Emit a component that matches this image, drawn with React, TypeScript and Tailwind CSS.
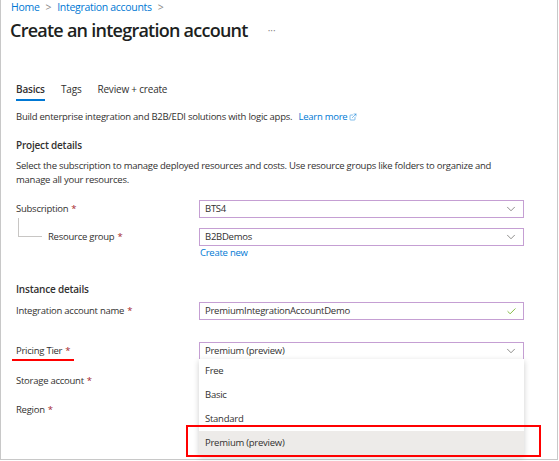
import { ChevronDown, Check, ExternalLink } from 'lucide-react'

const font = { fontFamily: '"Open Sans", "Noto Sans", Arial, sans-serif' }

// body text of the blade
const body = 'text-[9.5px] tracking-[-0.25px] text-[#323130]'

function Req() {
  return <span className="ml-[3px] text-[#a4262c]">*</span>
}

function Field({ value, icon = 'chevron' }: { value: string; icon?: 'chevron' | 'check' }) {
  return (
    <div className="flex h-[18px] w-[325px] items-center justify-between border border-[#c59fd3] pl-[5px] pr-[5px]">
      <span className={`${body} leading-none`}>{value}</span>
      {icon === 'chevron' ? (
        <ChevronDown className="text-[#605e5c]" size={14} strokeWidth={1.2} />
      ) : (
        <Check className="mr-[1px] text-[#57a300]" size={11} strokeWidth={1.6} />
      )}
    </div>
  )
}

function Row({ label, children, indent = false }: { label: React.ReactNode; children: React.ReactNode; indent?: boolean }) {
  return (
    <div className="flex h-[18px] items-center">
      <div className={`w-[183px] ${body} ${indent ? 'pl-[32px]' : ''}`}>{label}</div>
      {children}
    </div>
  )
}

export default function App() {
  return (
    <div className="relative h-[461px] w-[559px] overflow-hidden bg-white" style={font}>
      <div className="h-[460px] w-[558px] border-x border-b border-[#c8c8c8]">
        {/* Breadcrumb */}
        <div className="flex h-[14px] items-center gap-[6px] pl-[10px] text-[10.5px] leading-[14px] tracking-[-0.3px] text-[#0078d4]">
          <span>Home</span>
          <span className="text-[#8a8886]">&gt;</span>
          <span>Integration accounts</span>
          <span className="text-[#8a8886]">&gt;</span>
        </div>

        {/* Title */}
        <div className="mt-[2px] flex h-[28px] items-center pl-[9px]">
          <h1 className="text-[18px] font-semibold leading-[28px] tracking-[-0.75px] text-[#201f1e]">Create an integration account</h1>
          <span className="ml-[20px] text-[10px] text-[#8a8886]">···</span>
        </div>

        <div className="pl-[15px]">
          {/* Tabs */}
          <div className="mt-[35px] flex gap-[16px] text-[10px] tracking-[-0.2px] text-[#323130]">
            <div className="flex flex-col">
              <span className="h-[20px] leading-[20px] font-semibold">Basics</span>
              <span className="h-[2px] w-[29px] bg-[#0078d4]" />
            </div>
            <span className="h-[20px] leading-[20px]">Tags</span>
            <span className="h-[20px] leading-[20px]">Review + create</span>
          </div>

          {/* Description */}
          <p className={`mt-[8px] leading-[16px] ${body}`}>
            Build enterprise integration and B2B/EDI solutions with logic apps.{' '}
            <span className="ml-[4px] inline-flex items-center gap-[2px] text-[#0078d4]">
              Learn more <ExternalLink size={8} strokeWidth={1.5} />
            </span>
          </p>

          <h2 className="mt-[12px] text-[10px] font-semibold leading-[16px] tracking-[-0.2px] text-[#323130]">Project details</h2>
          <p className={`mt-[6px] w-[500px] leading-[14px] ${body}`}>
            Select the subscription to manage deployed resources and costs. Use resource groups like folders to organize and
            manage all your resources.
          </p>

          <div className="mt-[13px]">
            <Row label={<>Subscription<Req /></>}>
              <Field value="BTS4" />
            </Row>
          </div>
          <div className="relative mt-[10px]">
            <div className="absolute left-[2px] top-[-10px] h-[19px] w-[24px] border-b border-l border-[#c8c6c4]" />
            <Row indent label={<>Resource group<Req /></>}>
              <Field value="B2BDemos" />
            </Row>
          </div>
          <div className="ml-[184px] text-[9.5px] leading-[14px] tracking-[-0.25px] text-[#0078d4]">Create new</div>

          <h2 className="mt-[21px] text-[10px] font-semibold leading-[16px] tracking-[-0.2px] text-[#323130]">Instance details</h2>
          <div className="mt-[5px]">
            <Row label={<>Integration account name<Req /></>}>
              <Field value="PremiumIntegrationAccountDemo" icon="check" />
            </Row>
          </div>
          <div className="mt-[22px]">
            <Row label={<>Pricing Tier<Req /></>}>
              <Field value="Premium (preview)" />
            </Row>
          </div>
          <div className={`mt-[13px] leading-[16px] ${body}`}>
            Storage account<Req />
          </div>
          <div className={`mt-[13px] leading-[16px] ${body}`}>
            Region<Req />
          </div>
        </div>
      </div>

      {/* Red underline annotation */}
      <div className="absolute left-[12px] top-[359px] h-[2px] w-[62px] bg-[#ff0000]" />

      {/* Open dropdown */}
      <div className={`absolute left-[199px] top-[359px] w-[325px] bg-white shadow-[0_2px_6px_rgba(0,0,0,0.2)] ${body}`}>
        {['Free', 'Basic', 'Standard'].map((o) => (
          <div key={o} className="flex h-[24px] items-center pl-[6px]">{o}</div>
        ))}
        <div className="flex h-[24px] items-center bg-[#edebe9] pl-[6px]">Premium (preview)</div>
      </div>

      {/* Red highlight box */}
      <div className="absolute left-[186px] top-[425px] h-[32px] w-[355px] border-2 border-[#ff0000]" />
    </div>
  )
}
